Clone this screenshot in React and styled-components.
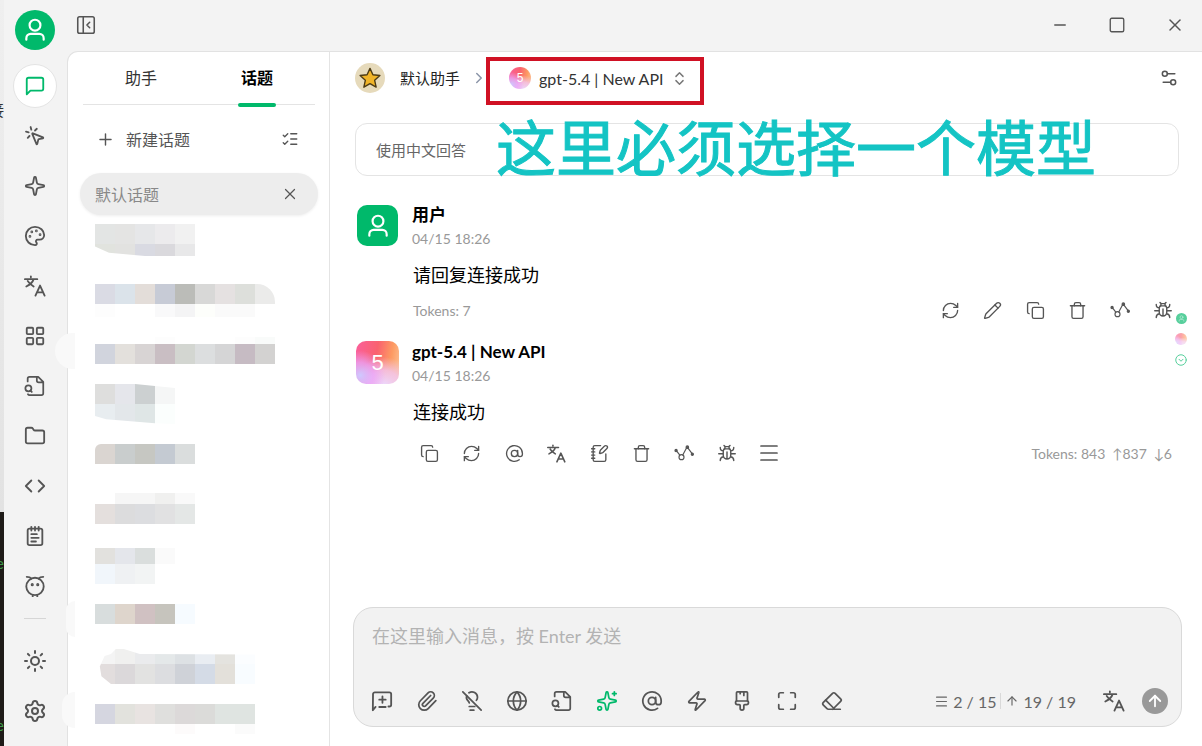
import styled, { createGlobalStyle } from "styled-components";
import {
  AtSign,
  ChevronRight,
  ChevronsUpDown,
  Code,
  Copy,
  Eraser,
  Folder,
  Globe,
  LayoutGrid,
  LightbulbOff,
  ListChecks,
  ArrowUp,
  Maximize,
  Menu,
  Minus,
  MousePointerClick,
  NotepadText,
  NotebookPen,
  PaintbrushVertical,
  Palette,
  PanelLeftClose,
  Paperclip,
  Pencil,
  Plus,
  RefreshCw,
  Settings,
  Settings2,
  Sparkle,
  Sparkles,
  Square,
  Sun,
  Trash,
  X,
  Zap,
} from "lucide-react";

const sansFont = `Lato, "Noto Sans CJK SC", sans-serif`;

const Svg = ({ size = 22, width = 2, children }) => (
  <svg
    width={size}
    height={size}
    viewBox="0 0 24 24"
    fill="none"
    stroke="currentColor"
    strokeWidth={width}
    strokeLinecap="round"
    strokeLinejoin="round"
    aria-hidden="true"
  >
    {children}
  </svg>
);

const UserIcon = ({ size, width }) => (
  <Svg size={size} width={width}>
    <circle cx="12" cy="7.5" r="5" />
    <path d="M4 21v-1.5a4 4 0 0 1 4-4h8a4 4 0 0 1 4 4V21" />
  </Svg>
);

const ChatIcon = () => (
  <Svg>
    <path d="M21 15a2 2 0 0 1-2 2H7l-4 4V5a2 2 0 0 1 2-2h14a2 2 0 0 1 2 2z" />
  </Svg>
);

const FileSearchIcon = ({ size = 22 }) => (
  <Svg size={size} width={1.9}>
    <path d="M14 2v4a2 2 0 0 0 2 2h4M4.300 21a2 2 0 0 0 1.700 1H19a2 2 0 0 0 2-2V7.500L15.500 2H6a2 2 0 0 0-2 2v3M8.500 18.500 7 17" />
    <circle cx="4.800" cy="14.500" r="3.300" />
  </Svg>
);

const TranslateIcon = ({ size = 22 }) => (
  <Svg size={size} width={2}>
    <path d="M1 4.5h13.500M7.500 1.500v1M2.500 12.500c4-2 7-4.500 8-8M4 6.500c1.500 3 4 4.500 6.500 6M12.500 22.500 17.500 11.500l5 11M14 19h7" />
  </Svg>
);

const ClawIcon = () => (
  <Svg>
    <circle cx="12" cy="12.500" r="9.500" />
    <path d="M3 2c2.500 0 4 .5 5 2M21 2c-2.500 0-4 .5-5 2M9.500 22v1.500M14.500 22v1.500" />
    <circle cx="9" cy="10.500" r=".7" fill="currentColor" />
    <circle cx="15" cy="10.500" r=".7" fill="currentColor" />
  </Svg>
);

const TraceIcon = () => (
  <Svg size={20} width={1.4}>
    <circle cx="2.500" cy="9" r="1.300" fill="currentColor" />
    <circle cx="9" cy="17" r="3" />
    <circle cx="16" cy="5" r="1.500" fill="currentColor" />
    <circle cx="22" cy="13.500" r="1.300" fill="currentColor" />
    <path d="m3.500 10 3.500 4.500M10.500 14.500 15 6M17 6.500l4.500 6" />
  </Svg>
);

const BugIcon = () => (
  <Svg size={18} width={1.900}>
    <path d="M8 6.500h8M7 9.500a3 3 0 0 1 3-3h4a3 3 0 0 1 3 3V15a5 5 0 0 1-10 0zM12 10.500V19M9 6l.5-2.500h5L15 6M8 2l1.500 1.500M16 2l-1.500 1.500M1 13h6M17 13h6M3 4.500c0 3 1.500 4.500 4 4.500M21 4.500c0 3-1.500 4.500-4 4.500M3 22c0-3 1.500-4.500 4-5M21 22c0-3-1.500-4.500-4-5" />
  </Svg>
);

const NewTopicIcon = () => (
  <Svg>
    <path d="m2 22 .2-17.500A2 2 0 0 1 4.200 2.500H20a2 2 0 0 1 2 2V16a2 2 0 0 1-2 2h-1M2 22l3-3.500M9 18.500h7M12.500 7v7M9 10.500h7" />
  </Svg>
);

const StarIcon = () => (
  <svg width="22" height="22" viewBox="0 0 24 24" aria-hidden="true">
    <path
      d="m12 1.500 3.200 7 7.600.8-5.700 5.200 1.600 7.500-6.700-3.900L5.300 22l1.600-7.500-5.700-5.200 7.600-.8z"
      fill="#f0b429"
      stroke="#4d3b14"
      strokeWidth="1.500"
      strokeLinejoin="round"
    />
  </svg>
);

const navItems = [
  ["快捷", MousePointerClick],
  ["智能体", Sparkle],
  ["绘画", Palette],
  ["翻译", TranslateIcon],
  ["小程序", LayoutGrid],
  ["知识库", FileSearchIcon],
  ["文件", Folder],
  ["代码", Code],
  ["笔记", NotepadText],
  ["Claw", ClawIcon],
];

// 模糊处理后的话题标题，每个色块 20px
const topics = [
  {
    gap: 9,
    clip: "polygon(0 0, 100% 0, 100% 100%, 50% 100%, 14% 90%, 0 70%)",
    rows: [
      [20, "#e3e5e4 #e4e4e3 #e6e7e9 #ecebed #f1f1f1"],
      [12, "#e1e3de #e2e2e0 #d9dae2 #dad9dd #e8e8e9"],
    ],
  },
  {
    gap: 28,
    radius: "0 18px 0 0",
    rows: [
      [20, "#dadbe4 #dbe3ea #e3ddd9 #c7cbd6 #bbbcb8 #d8d8d7 #e5e1e1 #dddfdb #ebebea"],
      [13, "#fdfdfd #fff #fff #f9f9fa #f4f4f5 #fdfefb #fafafa #fafafa #fff"],
    ],
  },
  {
    gap: 20,
    rows: [
      [7, "#fff #fff #fff #fdfdfd #fff #fff #fff #fdfdfd #f9fbfa"],
      [20, "#d1d4dd #e3e0dc #d8d4d4 #c9bec3 #d3d6d1 #dcdedf #d5d5d6 #c6bbc3 #d3d2d1"],
    ],
  },
  {
    gap: 20,
    clip: "polygon(0 0, 50% 0, 100% 10%, 100% 100%, 75% 98%, 14% 88%, 0 80%)",
    rows: [
      [20, "#dededd #e5e6eb #ccd0d1 #f5f6f6"],
      [20, "#e8edf0 #e3e7ea #dfe6e6 #fbfefd"],
    ],
  },
  { gap: 20, radius: "6px 0 0 0", rows: [[20, "#dad5d1 #c9cdcd #c6c7c2 #c4cad2 #dadddd"]] },
  {
    gap: 29,
    rows: [
      [11, "#fff #f6f6f6 #f6f6f6 #f0f0ef #f9f9f9"],
      [20, "#e4dfdd #dcdcdd #dcdde0 #e1e1e2 #e4e7e6"],
    ],
  },
  {
    gap: 24,
    rows: [
      [16, "#e2e1de #e4e6eb #dadedd #fafafa"],
      [20, "#f1f6fb #eff1f3 #f2f4f4 #fff"],
    ],
  },
  { gap: 20, rows: [[20, "#d8dddd #ded5cc #d0c1c2 #c6c4bd #f6fbff"]] },
  {
    gap: 25,
    clip: "polygon(10% 14%, 13% 0, 18% 0, 28% 14%, 100% 16%, 100% 100%, 10% 100%, 4% 78%, 3% 50%, 6% 20%)",
    rows: [
      [15, "#f4f4f4 #f0f0ef #eaebed #e4e8e9 #dde1e4 #e9edf2 #e4e3df #fbfdff"],
      [20, "#e2dddd #dbd8da #e2e2e1 #dcdde0 #cfd2d8 #d4dbe6 #e3e0da #f8fcff"],
    ],
  },
  {
    gap: 20,
    rows: [
      [20, "#d5d6e0 #e2e2dd #e8e3e1 #dfdfdd #dcd9d9 #dbdbd9 #dfe4e1 #dfe4e1"],
      [10, "#fff #fff #fff #fff #fdfbfb #fff #fff #fbfbfb"],
    ],
  },
];

const composerTools = [
  ["新话题", NewTopicIcon],
  ["附件", Paperclip],
  ["思考", LightbulbOff],
  ["联网", Globe],
  ["知识库", FileSearchIcon],
  ["MCP", Sparkles, true],
  ["提及模型", AtSign],
  ["快捷短语", Zap],
  ["清空", PaintbrushVertical],
  ["展开", Maximize],
  ["清除上下文", Eraser],
];

const userTools = [RefreshCw, Pencil, Copy, Trash];
const botTools = [Copy, RefreshCw, AtSign, TranslateIcon, NotebookPen, Trash];

const App = () => {
  return (
    <>
      <GlobalStyle />
      <Desktop>
        <Behind>
          <BehindLight />
          <BehindDark />
          <BehindText $top={98} $color="#333">
            接
          </BehindText>
          <BehindText $top={551} $color="#3f9a4a">
            e
          </BehindText>
          <BehindText $top={713} $color="#3f9a4a">
            e
          </BehindText>
        </Behind>
        <Rail>
          <RailAvatar>
            <UserIcon size={26} width={2} />
          </RailAvatar>
          <RailButton $active aria-label="聊天">
            <ChatIcon />
          </RailButton>
          <RailNav>
            {navItems.map(([label, Icon]) => (
              <RailButton key={label} aria-label={label}>
                <Icon size={22} />
              </RailButton>
            ))}
          </RailNav>
          <RailLine />
          <RailNav>
            <RailButton aria-label="主题">
              <Sun size={24} />
            </RailButton>
            <RailButton aria-label="设置">
              <Settings size={24} />
            </RailButton>
          </RailNav>
        </Rail>
        <Window>
          <TitleBar>
            <IconButton aria-label="收起侧栏">
              <PanelLeftClose size={22} strokeWidth={1.7} />
            </IconButton>
            <WindowControls>
              <IconButton aria-label="最小化">
                <Minus size={18} strokeWidth={1.8} />
              </IconButton>
              <IconButton aria-label="最大化">
                <Square size={18} strokeWidth={1.8} />
              </IconButton>
              <IconButton aria-label="关闭">
                <X size={20} strokeWidth={1.8} />
              </IconButton>
            </WindowControls>
          </TitleBar>
          <Body>
            <Smudge $top={281} $left={-13} />
            <Smudge $top={549} $left={-2} />
            <Smudge $top={640} $left={-6} />
            <Sidebar>
              <Tabs>
                <Tab>助手</Tab>
                <Tab $active>话题</Tab>
              </Tabs>
              <NewTopicRow>
                <NewTopic>
                  <Plus size={19} strokeWidth={1.8} />
                  新建话题
                </NewTopic>
                <IconButton aria-label="管理话题">
                  <ListChecks size={18} strokeWidth={1.8} />
                </IconButton>
              </NewTopicRow>
              <ActiveTopic>
                默认话题
                <IconButton aria-label="删除话题">
                  <X size={18} strokeWidth={1.6} />
                </IconButton>
              </ActiveTopic>
              <TopicList>
                {topics.map((topic, i) => (
                  <Mosaic key={i} $gap={topic.gap} $radius={topic.radius} $clip={topic.clip}>
                    {topic.rows.map(([height, colors], j) => (
                      <MosaicRow key={j} $height={height}>
                        {colors.split(" ").map((color, k) => (
                          <Block key={k} $color={color} />
                        ))}
                      </MosaicRow>
                    ))}
                  </Mosaic>
                ))}
              </TopicList>
            </Sidebar>
            <Chat>
              <ChatHeader>
                <StarBadge>
                  <StarIcon />
                </StarBadge>
                <AssistantName>默认助手</AssistantName>
                <ChevronRight size={18} color="#8b95a8" strokeWidth={2} />
                <ModelPicker>
                  <ModelLogo $size={22}>5</ModelLogo>
                  gpt-5.4 | New API
                  <ChevronsUpDown size={17} color="#777" />
                </ModelPicker>
                <HeaderEnd>
                  <IconButton aria-label="设置">
                    <Settings2 size={20} strokeWidth={1.8} />
                  </IconButton>
                </HeaderEnd>
              </ChatHeader>
              <Prompt>
                使用中文回答
                <Callout>这里必须选择一个模型</Callout>
              </Prompt>
              <Message $gap={28}>
                <UserAvatar>
                  <UserIcon size={26} width={2} />
                </UserAvatar>
                <div>
                  <Name>用户</Name>
                  <Time>04/15 18:26</Time>
                  <Content>请回复连接成功</Content>
                  <MessageFooter $gap={10}>
                    <Tokens>Tokens: 7</Tokens>
                    <Tools $width={241}>
                      {userTools.map((Icon, i) => (
                        <ToolButton key={i} aria-label={`操作 ${i + 1}`}>
                          <Icon size={19} strokeWidth={1.7} />
                        </ToolButton>
                      ))}
                      <ToolButton aria-label="链路">
                        <TraceIcon />
                      </ToolButton>
                      <ToolButton aria-label="调试">
                        <BugIcon />
                      </ToolButton>
                    </Tools>
                  </MessageFooter>
                </div>
              </Message>
              <Message $gap={19}>
                <ModelLogo $size={43} $square>
                  5
                </ModelLogo>
                <div>
                  <Name>gpt-5.4 | New API</Name>
                  <Time>04/15 18:26</Time>
                  <Content>连接成功</Content>
                  <MessageFooter $gap={16}>
                    <Tools $width={368}>
                      {botTools.map((Icon, i) => (
                        <ToolButton key={i} aria-label={`操作 ${i + 1}`}>
                          <Icon size={19} strokeWidth={1.7} />
                        </ToolButton>
                      ))}
                      <ToolButton aria-label="链路">
                        <TraceIcon />
                      </ToolButton>
                      <ToolButton aria-label="调试">
                        <BugIcon />
                      </ToolButton>
                      <ToolButton aria-label="更多">
                        <Menu size={24} strokeWidth={1.7} />
                      </ToolButton>
                    </Tools>
                    <Tokens>
                      Tokens: 843 <span>↑837</span> <span>↓6</span>
                    </Tokens>
                  </MessageFooter>
                </div>
              </Message>
              <Anchors>
                <Anchor $green>
                  <UserIcon size={7} width={2} />
                </Anchor>
                <ModelLogo $size={12} $faded />
                <Anchor>
                  <Svg size={12} width={2}>
                    <circle cx="12" cy="12" r="10.500" />
                    <path d="m8 10.500 4 4 4-4" />
                  </Svg>
                </Anchor>
              </Anchors>
              <Composer>
                <Input aria-label="消息" placeholder="在这里输入消息，按 Enter 发送" />
                <ComposerBar>
                  <ComposerTools>
                    {composerTools.map(([label, Icon, on]) => (
                      <ComposerButton key={label} $on={on} aria-label={label}>
                        <Icon size={22} strokeWidth={1.9} />
                      </ComposerButton>
                    ))}
                  </ComposerTools>
                  <Counter>
                    <Menu size={15} strokeWidth={1.7} />
                    <span>2 / 15</span>
                    <CounterLine />
                    <ArrowUp size={14} />
                    <span>19 / 19</span>
                  </Counter>
                  <IconButton aria-label="翻译">
                    <TranslateIcon />
                  </IconButton>
                  <SendButton aria-label="发送">
                    <ArrowUp size={18} strokeWidth={2.4} />
                  </SendButton>
                </ComposerBar>
              </Composer>
            </Chat>
          </Body>
        </Window>
      </Desktop>
    </>
  );
};

const GlobalStyle = createGlobalStyle`
  * {
    box-sizing: border-box;
  }
  body {
    margin: 0;
    font-family: ${sansFont};
    color: #333;
  }
  button {
    display: inline-flex;
    align-items: center;
    justify-content: center;
    border: 0;
    padding: 0;
    background: none;
    color: #555;
    font: inherit;
    cursor: pointer;
  }
  svg {
    flex: none;
  }
`;

const Desktop = styled.div`
  display: flex;
  height: 100vh;
  overflow: hidden;
  background-color: #f3f3f3;
`;

const Behind = styled.div`
  position: relative;
  display: flex;
  flex-direction: column;
  flex: none;
  width: 4px;
  overflow: hidden;
`;

const BehindLight = styled.div`
  flex: 512;
  background: linear-gradient(#efefef, #e2e2e2);
`;

const BehindDark = styled.div`
  flex: 234;
  background-color: #1e1b18;
`;

/* 后面窗口露出来的文字边缘 */
const BehindText = styled.span`
  position: absolute;
  top: ${({ $top }) => $top}px;
  right: 0;
  color: ${({ $color }) => $color};
  font-size: 16px;
  line-height: 24px;
`;

const Rail = styled.aside`
  display: flex;
  flex-direction: column;
  align-items: center;
  flex: none;
  width: 63px;
  padding: 10px 1px 0 0;
`;

const RailAvatar = styled.div`
  display: flex;
  align-items: center;
  justify-content: center;
  width: 40px;
  height: 40px;
  margin-bottom: 14px;
  border-radius: 50%;
  background-color: #00b96b;
  color: white;
`;

const RailButton = styled.button`
  width: 44px;
  height: 44px;
  border-radius: 50%;
  && {
    border: 1px solid ${({ $active }) => ($active ? "#e4e4e4" : "transparent")};
    background-color: ${({ $active }) => ($active ? "white" : "transparent")};
    color: ${({ $active }) => ($active ? "#00b96b" : "#555")};
  }
`;

const RailNav = styled.nav`
  display: flex;
  flex-direction: column;
  gap: 6px;
  padding-top: 6px;
`;

const RailLine = styled.div`
  width: 22px;
  height: 1px;
  margin: 10px 0 14px;
  background-color: #d6d6d6;
`;

const Window = styled.div`
  display: flex;
  flex-direction: column;
  flex: 1;
  min-width: 0;
`;

const TitleBar = styled.header`
  display: flex;
  align-items: center;
  justify-content: space-between;
  height: 51px;
  padding: 0 17px 2px 8px;
`;

const WindowControls = styled.div`
  display: flex;
  gap: 39px;
`;

const IconButton = styled.button``;

const Body = styled.div`
  position: relative;
  display: flex;
  flex: 1;
  min-height: 0;
  border-top: 1px solid #e2e2e2;
  border-left: 1px solid #e2e2e2;
  border-radius: 11px 0 0 0;
  background-color: white;
`;

/* 马赛克笔刷在侧栏边缘留下的浅色痕迹 */
const Smudge = styled.div`
  position: absolute;
  top: ${({ $top }) => $top}px;
  left: ${({ $left }) => $left}px;
  width: ${({ $left }) => 7 - $left}px;
  height: 36px;
  border-radius: 18px 0 0 18px;
  background-color: #f9f9f9;
`;

const Sidebar = styled.section`
  display: flex;
  flex-direction: column;
  flex: none;
  width: 262px;
  padding: 0 11px 0 12px;
  border-right: 1px solid #e4e4e4;
`;

const Tabs = styled.div`
  display: flex;
  height: 53px;
  margin: 0 3px;
  border-bottom: 1px solid #e4e4e4;
`;

const Tab = styled.button`
  position: relative;
  flex: 1;
  && {
    padding-bottom: 3px;
    color: ${({ $active }) => ($active ? "#000" : "#333")};
    font-size: 16px;
    font-weight: ${({ $active }) => ($active ? 700 : 400)};
  }
  &::after {
    content: "";
    position: absolute;
    bottom: -3px;
    width: 38px;
    height: 4px;
    border-radius: 2px;
    background-color: ${({ $active }) => ($active ? "#00b96b" : "transparent")};
  }
`;

const NewTopicRow = styled.div`
  display: flex;
  align-items: center;
  justify-content: space-between;
  height: 68px;
  padding: 0 19px 0 16px;
`;

const NewTopic = styled.button`
  && {
    gap: 11px;
    font-size: 16px;
  }
`;

const ActiveTopic = styled.div`
  display: flex;
  align-items: center;
  justify-content: space-between;
  flex: none;
  height: 42px;
  padding: 0 19px 0 15px;
  border-radius: 21px;
  background-color: #ededed;
  color: #888;
  font-size: 16px;
  box-shadow: 0 1px 3px #00000012;
`;

const TopicList = styled.div`
  flex: 1;
  min-height: 0;
  overflow: hidden;
  padding-left: 15px;
`;

const Mosaic = styled.div`
  width: fit-content;
  margin-top: ${({ $gap }) => $gap}px;
  border-radius: ${({ $radius }) => $radius || 0};
  clip-path: ${({ $clip }) => $clip || "none"};
  overflow: hidden;
`;

const MosaicRow = styled.div`
  display: flex;
  height: ${({ $height }) => $height}px;
`;

const Block = styled.div`
  width: 20px;
  background-color: ${({ $color }) => $color};
`;

const Chat = styled.main`
  position: relative;
  display: flex;
  flex-direction: column;
  flex: 1;
  min-width: 0;
  padding: 0 20px 19px 23px;
`;

const ChatHeader = styled.div`
  display: flex;
  align-items: center;
  height: 52px;
  margin-left: 2px;
`;

const StarBadge = styled.div`
  display: flex;
  align-items: center;
  justify-content: center;
  width: 30px;
  height: 30px;
  border-radius: 50%;
  background-color: #e6dabb;
`;

const AssistantName = styled.span`
  margin: 0 10px 0 15px;
  padding-bottom: 2px;
  color: #222;
  font-size: 15px;
`;

const ModelPicker = styled.button`
  && {
    align-self: flex-start;
    gap: 8px;
    height: 48px;
    margin-top: 5px;
    margin-left: -2px;
    padding: 0 12px 6px 19px;
    border: 4px solid #d01124;
    color: #333;
    font-size: 16px;
    white-space: nowrap;
  }
`;

const HeaderEnd = styled.div`
  display: flex;
  margin-left: auto;
  padding-right: 3px;
`;

const ModelLogo = styled.div`
  display: flex;
  align-items: center;
  justify-content: center;
  flex: none;
  width: ${({ $size }) => $size}px;
  height: ${({ $size }) => $size}px;
  border-radius: ${({ $square }) => ($square ? "10px" : "50%")};
  background: radial-gradient(circle at 10% 80%, #cfc8ff 0, #e9a8ffbb 25%, transparent 48%),
    radial-gradient(circle at 65% 105%, #ecd9ff 0, #f3c8f4cc 30%, transparent 55%),
    linear-gradient(100deg, #fb5f9c 0, #f9626f 45%, #fd9a62 75%, #fbc79c 100%);
  color: white;
  font-family: "Liberation Sans", sans-serif;
  font-size: ${({ $square }) => ($square ? 22 : 12)}px;
  opacity: ${({ $faded }) => ($faded ? 0.6 : 1)};
`;

const Prompt = styled.div`
  position: relative;
  display: flex;
  align-items: center;
  height: 53px;
  margin: 19px 3px 0 2px;
  padding-left: 20px;
  border: 1px solid #e4e4e4;
  border-radius: 12px;
  color: #666;
  font-size: 15px;
`;

const Callout = styled.div`
  position: absolute;
  left: 140px;
  top: -20px;
  color: #14c4c4;
  font-size: 60px;
  line-height: 88px;
  white-space: nowrap;
  -webkit-text-stroke: 1px #14c4c4;
`;

const Message = styled.article`
  display: grid;
  grid-template-columns: 43px 1fr;
  gap: 13px;
  align-items: start;
  margin: ${({ $gap }) => $gap}px 3px 0;
`;

const UserAvatar = styled.div`
  display: flex;
  align-items: center;
  justify-content: center;
  width: 41px;
  height: 41px;
  margin: 1px 0 0 1px;
  border-radius: 10px;
  background-color: #00b96b;
  color: white;
`;

const Name = styled.div`
  color: #000;
  font-size: 17px;
  font-weight: 700;
  line-height: 22px;
`;

const Time = styled.div`
  margin-top: 2px;
  color: #999;
  font-size: 14px;
  line-height: 22px;
`;

const Content = styled.p`
  margin: 12px 0 0 1px;
  color: #000;
  font-size: 18px;
  line-height: 26px;
`;

const MessageFooter = styled.div`
  display: flex;
  align-items: center;
  justify-content: space-between;
  height: 24px;
  margin-top: ${({ $gap }) => $gap}px;
`;

const Tokens = styled.span`
  margin-left: 1px;
  padding-right: 7px;
  color: #999;
  font-size: 14px;
  span {
    margin-left: 3px;
  }
`;

const Tools = styled.div`
  display: flex;
  justify-content: space-between;
  width: ${({ $width }) => $width}px;
  margin: 0 2px 0 3px;
`;

const ToolButton = styled.button`
  width: 28px;
  height: 24px;
`;

const Anchors = styled.div`
  position: absolute;
  top: 261px;
  right: 15px;
  display: flex;
  flex-direction: column;
  align-items: center;
  gap: 9px;
`;

const Anchor = styled.div`
  display: flex;
  align-items: center;
  justify-content: center;
  width: 11px;
  height: 11px;
  border-radius: 50%;
  background-color: ${({ $green }) => ($green ? "#57cf9c" : "transparent")};
  color: ${({ $green }) => ($green ? "#c9f2e0" : "#57cf9c")};
`;

const Composer = styled.div`
  display: flex;
  flex-direction: column;
  justify-content: space-between;
  height: 120px;
  margin-top: auto;
  padding: 15px 13px 12px 17px;
  border: 1px solid #d9d9d9;
  border-radius: 20px;
  background-color: #f2f2f2;
`;

const Input = styled.input`
  width: 100%;
  height: 26px;
  border: 0;
  padding: 0 1px;
  outline: 0;
  background: none;
  font-family: inherit;
  font-size: 18px;
  &::placeholder {
    color: #b3b3b3;
  }
`;

const ComposerBar = styled.div`
  display: flex;
  align-items: center;
`;

const ComposerTools = styled.div`
  display: flex;
  gap: 23px;
  margin-right: auto;
`;

const ComposerButton = styled.button`
  && {
    color: ${({ $on }) => ($on ? "#00b96b" : "#555")};
  }
`;

const Counter = styled.div`
  display: flex;
  align-items: center;
  gap: 4px;
  margin-right: 27px;
  color: #666;
  font-size: 16px;
  white-space: nowrap;
`;

const CounterLine = styled.div`
  width: 1px;
  height: 16px;
  background-color: #d9d9d9;
`;

const SendButton = styled.button`
  && {
    width: 26px;
    height: 26px;
    margin-left: 17px;
    border-radius: 50%;
    background-color: #999;
    color: white;
  }
`;

export default App;
